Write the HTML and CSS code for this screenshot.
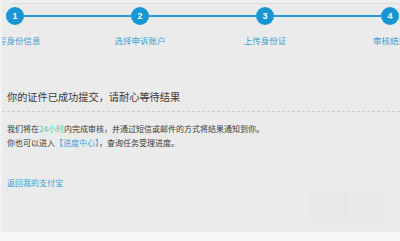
FILE: index.html
```html
<!DOCTYPE html>
<html lang="zh-CN">
<head>
<meta charset="utf-8">
<link rel="stylesheet" href="styles.css">
</head>
<body>
<div class="main">
  <div class="topbar"></div>
  <div class="steps">
    <div class="track">
      <span class="dot">1</span><span class="bar"></span>
      <span class="dot">2</span><span class="bar"></span>
      <span class="dot">3</span><span class="bar"></span>
      <span class="dot">4</span>
    </div>
    <div class="labels">
      <span class="label">填写身份信息</span>
      <span class="label">选择申诉账户</span>
      <span class="label">上传身份证</span>
      <span class="label">审核结果</span>
    </div>
  </div>
  <h1 class="title">你的证件已成功提交，请耐心等待结果</h1>
  <div class="info">
    <p class="line">我们将在<span class="green">24小时</span>内完成审核，并通过短信或邮件的方式将结果通知到你。</p>
    <p class="line">你也可以进入<span class="blue">【进度中心】</span>，查询任务受理进度。</p>
  </div>
  <a class="back" href="#">返回我的支付宝</a>
  <div class="mark"><span class="mark-a"></span><span class="mark-b"></span></div>
</div>
<div class="footer"></div>
</body>
</html>
```
FILE: styles.css
```css
* { box-sizing: border-box; }
html, body {
  margin: 0;
  padding: 0;
}
body {
  width: 400px;
  height: 241px;
  overflow: hidden;
  background: #ebebeb;
  font-family: "Noto Sans CJK SC", "Noto Sans", sans-serif;
}
.main {
  position: relative;
  height: 232px;
  border-left: 2px solid #f2f2f2;
  overflow: hidden;
}
.topbar {
  height: 4px;
  background: #efefef;
  border-bottom: 1px solid #dddddd;
  margin-left: 8px;
}
.steps {
  padding-top: 3px;
}
.track {
  display: flex;
  align-items: center;
  padding-left: 4px;
}
.dot {
  flex: 0 0 18px;
  width: 18px;
  height: 18px;
  border-radius: 50%;
  background: #1895d3;
  color: #ffffff;
  font-family: "Liberation Sans", Arial, sans-serif;
  font-weight: bold;
  font-size: 9px;
  line-height: 18px;
  text-align: center;
}
.bar {
  flex: 0 0 107px;
  height: 2px;
  background: #2a9bd8;
}
.labels {
  display: flex;
  margin-left: -49.5px;
  margin-top: 10px;
}
.label {
  flex: 0 0 125px;
  text-align: center;
  white-space: nowrap;
  font-size: 8.5px;
  line-height: 11px;
  color: #3d9fd4;
}
.title {
  margin: 44px 0 0 0;
  padding: 0 0 7px 5px;
  font-size: 10.2px;
  line-height: 14px;
  font-weight: normal;
  color: #3a3a3a;
  border-bottom: 1px dashed #cfcfcf;
  white-space: nowrap;
}
.info {
  padding: 10px 0 0 5px;
}
.line {
  margin: 0;
  font-size: 8px;
  line-height: 14px;
  color: #3a3a3a;
  white-space: nowrap;
}
.green { color: #55c7a4; }
.blue { color: #3f9fd6; }
.back {
  display: inline-block;
  margin: 27px 0 0 5px;
  font-size: 8px;
  line-height: 12px;
  color: #3a9ed6;
  text-decoration: none;
}
.mark {
  position: absolute;
  left: 308px;
  top: 192px;
  display: flex;
  gap: 2px;
}
.mark-a {
  width: 40px;
  height: 31px;
  background: #e8e8e8;
}
.mark-b {
  width: 33px;
  height: 31px;
  background: #e9e9e9;
}
.footer {
  height: 9px;
  background: #f7f7f7;
}
```
